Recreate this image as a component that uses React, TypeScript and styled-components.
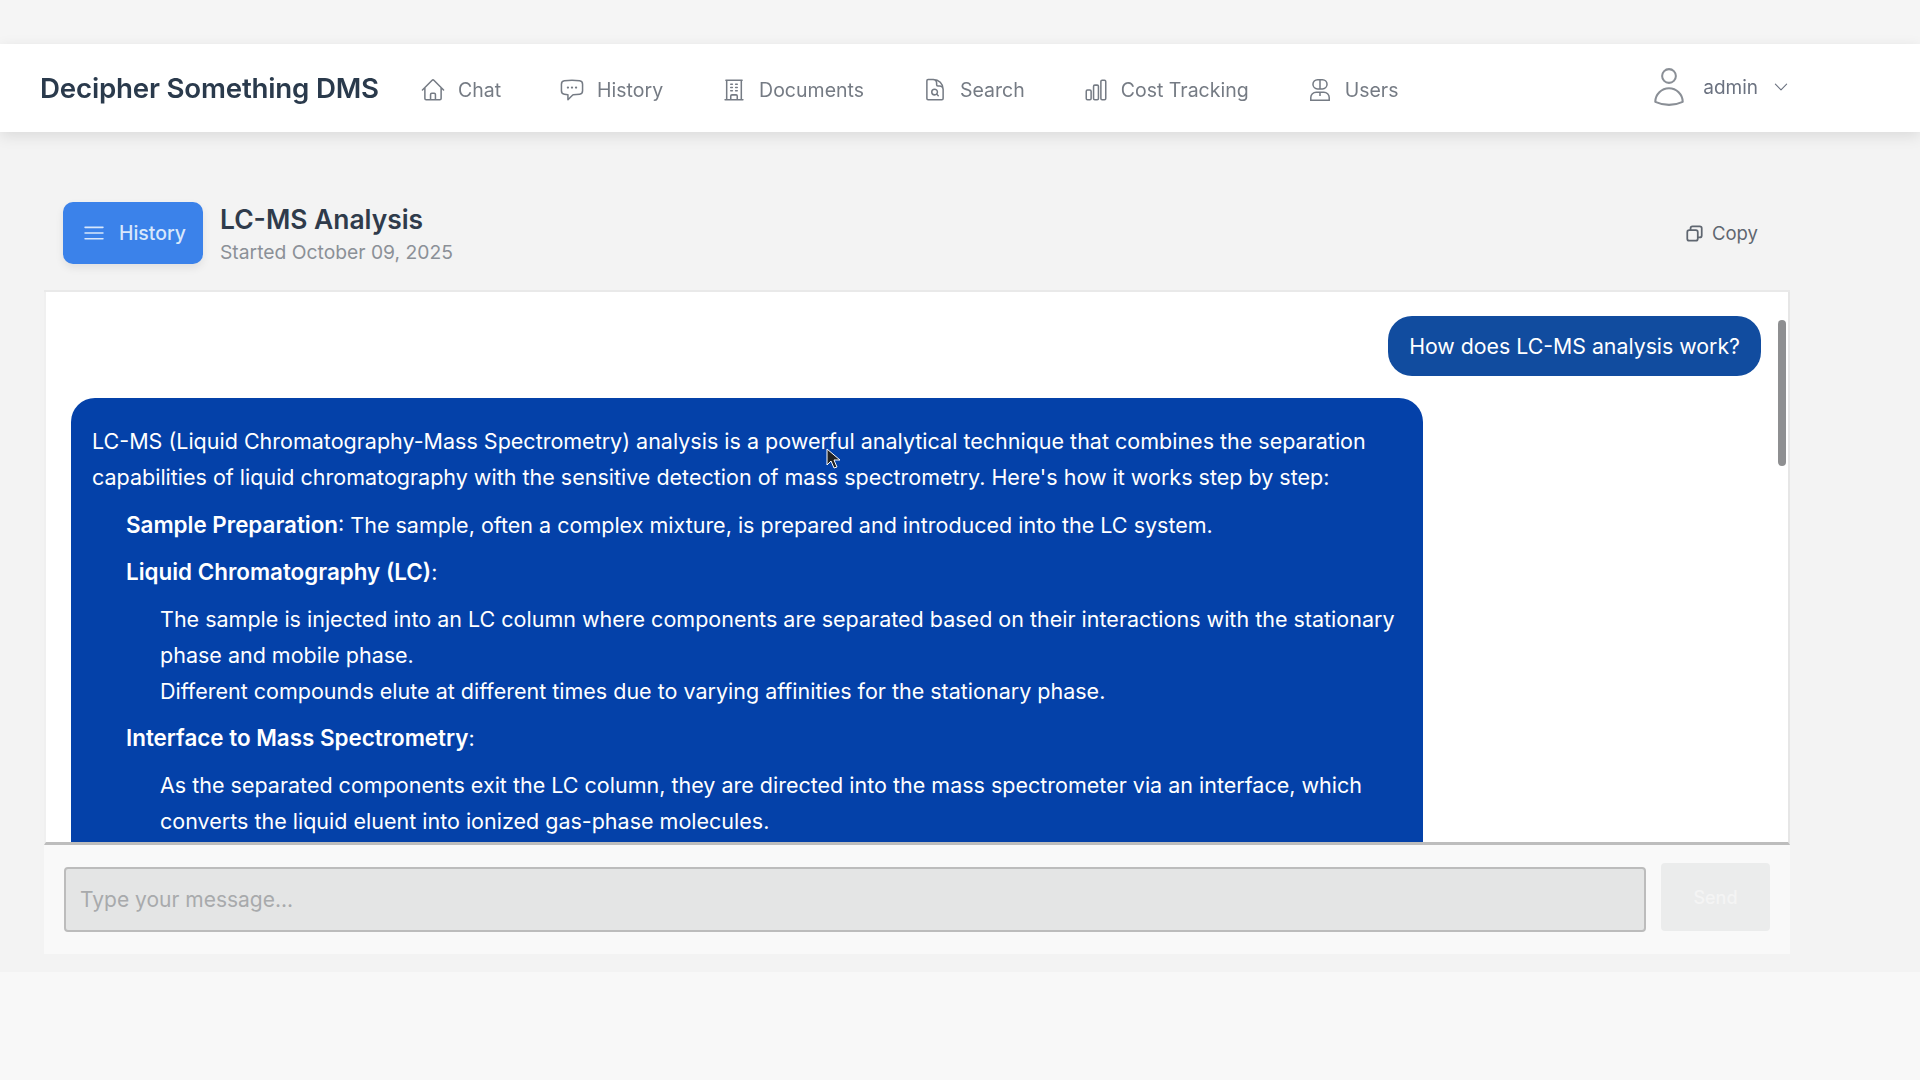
import * as React from 'react';
import styled, { createGlobalStyle } from 'styled-components';
import {
  HiOutlineHome,
  HiOutlineChatBubbleLeftEllipsis,
  HiOutlineBuildingOffice,
  HiOutlineDocumentMagnifyingGlass,
  HiOutlineChartBar,
  HiOutlineUser,
  HiOutlineChevronDown,
  HiOutlineSquare2Stack,
  HiBars3,
} from 'react-icons/hi2';

const GlobalStyle = createGlobalStyle`
  html, body {
    margin: 0;
    padding: 0;
    background: #f8f8f8;
    font-family: Inter, "Liberation Sans", sans-serif;
    overflow: hidden;
  }
  * {
    box-sizing: border-box;
  }
`;

const Page = styled.div`
  display: flex;
  flex-direction: column;
  height: 1080px;
  background: #f8f8f8;
  filter: blur(0.5px);
`;

const TopBand = styled.div`
  flex: 0 0 44px;
  background: #f5f5f5;
`;

const Navbar = styled.header`
  display: flex;
  align-items: center;
  height: 88px;
  flex-shrink: 0;
  padding: 0 130px 0 40px;
  background: #fff;
  box-shadow: 0 4px 14px rgba(0, 0, 0, 0.1);
  position: relative;
  z-index: 1;
`;

const Brand = styled.div`
  width: 380px;
  font-size: 27.7px;
  font-weight: 600;
  letter-spacing: -0.2px;
  color: #2a3a4c;
  white-space: nowrap;
`;

const NavLinks = styled.nav`
  display: flex;
  align-items: center;
  gap: 58px;
  padding-top: 4px;
`;

const NavLink = styled.a`
  display: flex;
  align-items: center;
  gap: 12px;
  font-size: 19.5px;
  color: #757b84;
  white-space: nowrap;

  svg {
    width: 26px;
    height: 26px;
    stroke-width: 1.4;
  }
`;

const UserMenu = styled.div`
  display: flex;
  align-items: center;
  margin-left: auto;
  margin-top: -2px;
  font-size: 19px;
  color: #6b7280;
`;

const UserIcon = styled(HiOutlineUser)`
  width: 44px;
  height: 44px;
  margin-right: 12px;
  stroke-width: 1.1;
  color: #8a8f96;
`;

const Chevron = styled(HiOutlineChevronDown)`
  width: 18px;
  height: 18px;
  margin-left: 14px;
`;

const Main = styled.main`
  flex: 0 0 840px;
  padding: 58px 130px 0 44px;
  background: #f3f3f3;
`;

const Panel = styled.section`
  display: flex;
  flex-direction: column;
  height: 782px;
`;

const ChatHeader = styled.div`
  display: flex;
  align-items: center;
  height: 102px;
  padding: 0 32px 14px 19px;
  border-bottom: 2px solid #e9e9e9;
`;

const HistoryButton = styled.button`
  display: flex;
  align-items: center;
  gap: 12px;
  width: 140px;
  height: 62px;
  padding: 0 0 0 18px;
  border: none;
  border-radius: 10px;
  background: #3b82ea;
  color: #d8e7fb;
  font: 500 19.4px Inter, sans-serif;
  box-shadow: 0 4px 8px rgba(0, 0, 0, 0.08);

  svg {
    width: 26px;
    height: 26px;
  }
`;

const TitleBlock = styled.div`
  margin-left: 17px;
`;

const ChatTitle = styled.h1`
  margin: 0;
  font-size: 26.4px;
  font-weight: 600;
  line-height: 34px;
  color: #2f3b4b;
`;

const ChatDate = styled.div`
  margin-top: 4px;
  font-size: 19.3px;
  line-height: 24px;
  color: #8b9097;
`;

const CopyButton = styled.div`
  display: flex;
  align-items: center;
  gap: 7px;
  margin-left: auto;
  font-size: 18.5px;
  color: #5f6670;

  svg {
    width: 21px;
    height: 21px;
    stroke-width: 2;
    transform: scaleX(-1);
  }
`;

const ChatWindow = styled.div`
  position: relative;
  flex: 0 0 553px;
  display: flex;
  flex-direction: column;
  gap: 22px;
  padding: 24px 27px 0 25px;
  overflow: hidden;
  background: #fff;
  border-right: 2px solid #e6e6e6;
  border-bottom: 3px solid #bdbdbd;
  border-left: 2px solid #f0f0f0;
`;

const UserBubble = styled.div`
  align-self: flex-end;
  padding: 0 21px;
  height: 60px;
  line-height: 60px;
  border-radius: 24px;
  background: #114c9f;
  color: #fff;
  font-size: 21.3px;
  flex-shrink: 0;
`;

const BotBubble = styled.div`
  width: 1352px;
  flex-shrink: 0;
  padding: 25px 21px 40px;
  border-radius: 24px 24px 0 0;
  background: #0441a9;
  color: #fff;
  font-size: 21.5px;
  line-height: 36px;

  strong {
    font-size: 22.4px;
    font-weight: 600;
  }
`;

const Para = styled.p`
  margin: 0;
`;

const Steps = styled.ul`
  margin: 12px 0 0;
  padding: 0 0 0 34px;
  list-style: none;
`;

const Step = styled.li`
  margin-top: 11px;
`;

const SubSteps = styled.ul`
  margin: 11px 0 0;
  padding: 0 0 0 34px;
  list-style: none;
`;

const Scrollbar = styled.div`
  position: absolute;
  top: 28px;
  right: 2px;
  width: 8px;
  height: 146px;
  border-radius: 4px;
  background: #8e8f91;
`;

const Pointer = styled.svg`
  position: absolute;
  left: 780px;
  top: 156px;
  width: 16px;
  height: 22px;
`;

const InputBar = styled.form`
  display: flex;
  gap: 15px;
  height: 109px;
  padding: 18px 20px 0 20px;
  background: #f9f9f9;
`;

const MessageInput = styled.input`
  flex: 1;
  height: 65px;
  margin-top: 4px;
  padding: 0 14px;
  border: 2px solid #bcbcbc;
  border-radius: 4px;
  background: #e4e5e5;
  font: 21px Inter, sans-serif;

  &::placeholder {
    color: #a8aaac;
  }
`;

const SendButton = styled.button`
  width: 109px;
  height: 68px;
  border: none;
  border-radius: 4px;
  background: #ebecec;
  color: #f4f4f4;
  font: 500 18px Inter, sans-serif;
`;

const UsersIcon = () => (
  <svg viewBox="0 0 24 24" fill="none" stroke="currentColor" strokeWidth="1.5">
    <rect x="5.5" y="2.5" width="13" height="8.5" rx="4.2" />
    <path d="M12 2.5v8.5" />
    <path d="M3.5 21.5v-2.5a5 5 0 0 1 5-5h7a5 5 0 0 1 5 5v2.5z" />
    <path d="M12 14v3.5" />
  </svg>
);

const navItems = [
  { label: 'Chat', icon: <HiOutlineHome /> },
  { label: 'History', icon: <HiOutlineChatBubbleLeftEllipsis /> },
  { label: 'Documents', icon: <HiOutlineBuildingOffice /> },
  { label: 'Search', icon: <HiOutlineDocumentMagnifyingGlass /> },
  { label: 'Cost Tracking', icon: <HiOutlineChartBar /> },
  { label: 'Users', icon: <UsersIcon /> },
];

export default function App() {
  return (
    <Page>
      <GlobalStyle />
      <TopBand />
      <Navbar>
        <Brand>Decipher Something DMS</Brand>
        <NavLinks>
          {navItems.map(item => (
            <NavLink key={item.label}>
              {item.icon}
              {item.label}
            </NavLink>
          ))}
        </NavLinks>
        <UserMenu>
          <UserIcon />
          admin
          <Chevron />
        </UserMenu>
      </Navbar>
      <Main>
        <Panel>
          <ChatHeader>
            <HistoryButton>
              <HiBars3 />
              History
            </HistoryButton>
            <TitleBlock>
              <ChatTitle>LC-MS Analysis</ChatTitle>
              <ChatDate>Started October 09, 2025</ChatDate>
            </TitleBlock>
            <CopyButton>
              <HiOutlineSquare2Stack />
              Copy
            </CopyButton>
          </ChatHeader>
          <ChatWindow>
            <UserBubble>How does LC-MS analysis work?</UserBubble>
            <BotBubble>
              <Para>
                LC-MS (Liquid Chromatography-Mass Spectrometry) analysis is a powerful analytical
                technique that combines the separation capabilities of liquid chromatography with
                the sensitive detection of mass spectrometry. Here's how it works step by step:
              </Para>
              <Steps>
                <Step>
                  <strong>Sample Preparation</strong>: The sample, often a complex mixture, is
                  prepared and introduced into the LC system.
                </Step>
                <Step>
                  <strong>Liquid Chromatography (LC)</strong>:
                  <SubSteps>
                    <li>
                      The sample is injected into an LC column where components are separated based
                      on their interactions with the stationary phase and mobile phase.
                    </li>
                    <li>
                      Different compounds elute at different times due to varying affinities for the
                      stationary phase.
                    </li>
                  </SubSteps>
                </Step>
                <Step>
                  <strong>Interface to Mass Spectrometry</strong>:
                  <SubSteps>
                    <li>
                      As the separated components exit the LC column, they are directed into the mass
                      spectrometer via an interface, which converts the liquid eluent into ionized
                      gas-phase molecules.
                    </li>
                  </SubSteps>
                </Step>
              </Steps>
            </BotBubble>
            <Scrollbar />
            <Pointer viewBox="0 0 16 22">
              <path d="M1 1v16l4-4 3 7 3-1-3-7h6z" fill="#222" stroke="#fff" strokeWidth="1" />
            </Pointer>
          </ChatWindow>
          <InputBar onSubmit={e => e.preventDefault()}>
            <MessageInput placeholder="Type your message..." disabled />
            <SendButton disabled>Send</SendButton>
          </InputBar>
        </Panel>
      </Main>
    </Page>
  );
}
